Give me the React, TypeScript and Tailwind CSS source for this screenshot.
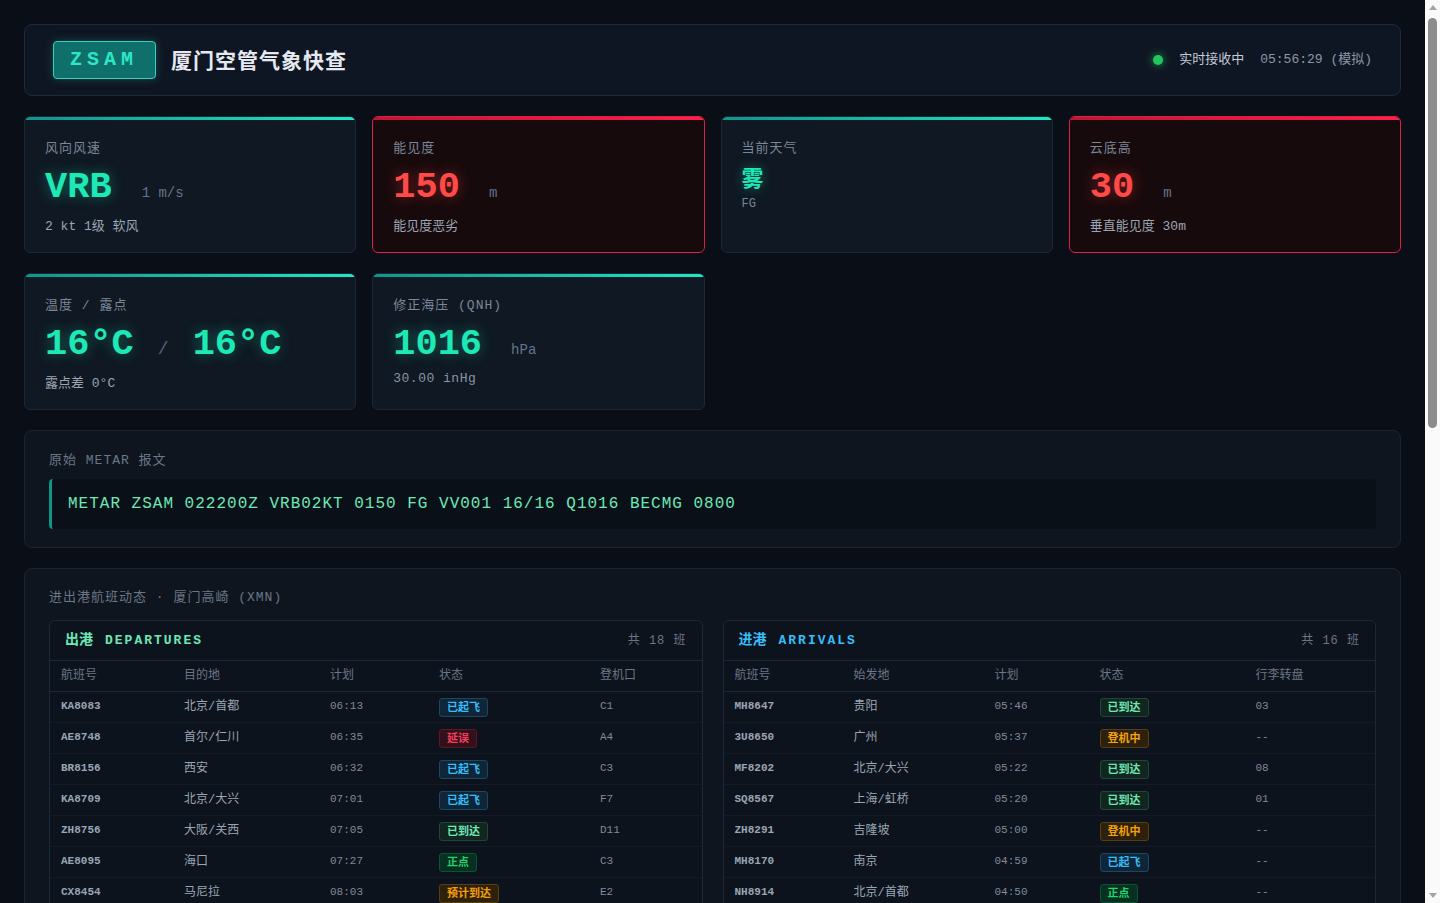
import React from "react";

type Tone = "teal" | "red";

type Flight = {
  no: string;
  place: string;
  time: string;
  status: string;
  extra: string;
};

const departures: Flight[] = [
  { no: "KA8083", place: "北京/首都", time: "06:13", status: "已起飞", extra: "C1" },
  { no: "AE8748", place: "首尔/仁川", time: "06:35", status: "延误", extra: "A4" },
  { no: "BR8156", place: "西安", time: "06:32", status: "已起飞", extra: "C3" },
  { no: "KA8709", place: "北京/大兴", time: "07:01", status: "已起飞", extra: "F7" },
  { no: "ZH8756", place: "大阪/关西", time: "07:05", status: "已到达", extra: "D11" },
  { no: "AE8095", place: "海口", time: "07:27", status: "正点", extra: "C3" },
  { no: "CX8454", place: "马尼拉", time: "08:03", status: "预计到达", extra: "E2" },
  { no: "MF8517", place: "成都/天府", time: "08:10", status: "登机中", extra: "B6" },
  { no: "CZ3812", place: "深圳", time: "08:25", status: "正点", extra: "A2" },
  { no: "3U8831", place: "重庆", time: "08:40", status: "延误", extra: "C5" },
  { no: "MU5186", place: "上海/浦东", time: "08:55", status: "正点", extra: "B1" },
  { no: "SQ8469", place: "新加坡", time: "09:05", status: "登机中", extra: "E4" },
  { no: "ZH8920", place: "杭州", time: "09:20", status: "正点", extra: "D3" },
  { no: "HU7304", place: "武汉", time: "09:35", status: "延误", extra: "A7" },
  { no: "MF8109", place: "昆明", time: "09:50", status: "正点", extra: "B8" },
  { no: "CA1810", place: "北京/首都", time: "10:05", status: "正点", extra: "C2" },
  { no: "NH8922", place: "东京/成田", time: "10:20", status: "正点", extra: "E1" },
  { no: "MH8375", place: "吉隆坡", time: "10:40", status: "正点", extra: "F3" },
];

const arrivals: Flight[] = [
  { no: "MH8647", place: "贵阳", time: "05:46", status: "已到达", extra: "03" },
  { no: "3U8650", place: "广州", time: "05:37", status: "登机中", extra: "--" },
  { no: "MF8202", place: "北京/大兴", time: "05:22", status: "已到达", extra: "08" },
  { no: "SQ8567", place: "上海/虹桥", time: "05:20", status: "已到达", extra: "01" },
  { no: "ZH8291", place: "吉隆坡", time: "05:00", status: "登机中", extra: "--" },
  { no: "MH8170", place: "南京", time: "04:59", status: "已起飞", extra: "--" },
  { no: "NH8914", place: "北京/首都", time: "04:50", status: "正点", extra: "--" },
  { no: "CZ3906", place: "沈阳", time: "06:15", status: "预计到达", extra: "--" },
  { no: "MF8308", place: "天津", time: "06:30", status: "延误", extra: "--" },
  { no: "CA1805", place: "北京/首都", time: "06:45", status: "正点", extra: "--" },
  { no: "MU5225", place: "上海/浦东", time: "07:00", status: "预计到达", extra: "--" },
  { no: "HO1052", place: "西安", time: "07:20", status: "正点", extra: "--" },
  { no: "ZH8703", place: "长沙", time: "07:35", status: "延误", extra: "--" },
  { no: "KA8012", place: "香港", time: "07:50", status: "正点", extra: "--" },
  { no: "BR8189", place: "台北/桃园", time: "08:05", status: "正点", extra: "--" },
  { no: "MF8656", place: "哈尔滨", time: "08:30", status: "预计到达", extra: "--" },
];

const statusClass: Record<string, string> = {
  已起飞: "text-[#38bdf8] bg-[#0e2638] border-[#1d4661]",
  延误: "text-[#f43f5e] bg-[#33101a] border-[#5b1628]",
  已到达: "text-[#6ee7b7] bg-[#10261f] border-[#1f4638]",
  正点: "text-[#22d36e] bg-[#06301f] border-[#0d5232]",
  预计到达: "text-[#f59e0b] bg-[#2e210c] border-[#5a3d12]",
  登机中: "text-[#f5a30b] bg-[#2e210c] border-[#5a3d12]",
};

function Card({
  tone,
  label,
  children,
}: {
  tone: Tone;
  label: string;
  children: React.ReactNode;
}) {
  const red = tone === "red";
  return (
    <div
      className={
        red
          ? "flex flex-col overflow-hidden rounded-md border border-[#dc1f45] bg-[#170a0c]"
          : "flex flex-col overflow-hidden rounded-md border border-[#1c2838] bg-[#0f1823]"
      }
    >
      <div
        className={
          red
            ? "h-[3px] bg-gradient-to-r from-[#c01634] to-[#ff1f4b]"
            : "h-[3px] bg-gradient-to-r from-[#11958a] to-[#1de9c4]"
        }
      />
      <div className="px-5 pt-[19px] pb-[15px]">
        <div className="text-[13px] leading-5 tracking-[1px] text-[#7b8696]">{label}</div>
        {children}
      </div>
    </div>
  );
}

function BigValue({ tone, children }: { tone: Tone; children: React.ReactNode }) {
  return (
    <span
      className={
        tone === "red"
          ? "text-[37px] font-bold leading-10 text-[#ff4a4a] [text-shadow:0_0_14px_rgba(255,60,60,0.45)]"
          : "text-[37px] font-bold leading-10 text-[#1de9b6] [text-shadow:0_0_14px_rgba(29,233,182,0.4)]"
      }
    >
      {children}
    </span>
  );
}

function FlightTable({
  kind,
  rows,
}: {
  kind: "dep" | "arr";
  rows: Flight[];
}) {
  const dep = kind === "dep";
  const cols = dep ? ["航班号", "目的地", "计划", "状态", "登机口"] : ["航班号", "始发地", "计划", "状态", "行李转盘"];
  const widths = dep
    ? ["w-[123px]", "w-[146px]", "w-[109px]", "w-[161px]", ""]
    : ["w-[119px]", "w-[141px]", "w-[105px]", "w-[156px]", ""];
  return (
    <div className="overflow-hidden rounded-md border border-[#1c2838] bg-[#0c131d]">
      <div className="flex h-10 items-center justify-between border-b border-[#1c2838] px-[15px]">
        <div className={dep ? "flex items-center text-[#6ee7b7]" : "flex items-center text-[#38bdf8]"}>
          <span className="text-[14px] font-bold">{dep ? "出港" : "进港"}</span>
          <span className="ml-3 text-[13px] font-bold tracking-[2px]">{dep ? "DEPARTURES" : "ARRIVALS"}</span>
        </div>
        <div className="text-[12px] tracking-[1px] text-[#6b7686]">
          共 {rows.length} 班
        </div>
      </div>
      <table className="w-full table-fixed border-collapse">
        <colgroup>
          {widths.map((w, i) => (
            <col key={i} className={w} />
          ))}
        </colgroup>
        <thead>
          <tr className="h-[30px] border-b border-[#1c2838]">
            {cols.map((c) => (
              <th key={c} className="px-[11px] pt-px text-left text-[12px] font-normal text-[#6b7686]">
                {c}
              </th>
            ))}
          </tr>
        </thead>
        <tbody>
          {rows.map((f, i) => (
            <tr key={f.no + i} className="h-[31px] border-t border-[#131b27] first:border-t-0">
              <td className="px-[11px] text-[11px] font-bold text-[#9aa5b4]">{f.no}</td>
              <td className="px-[11px] text-[12px] text-[#9aa5b4]">{f.place}</td>
              <td className="px-[11px] text-[11px] text-[#7f8a9a]">{f.time}</td>
              <td className="px-[11px]">
                <span
                  className={
                    "inline-flex h-[19px] items-center rounded-[3px] border px-[7px] text-[11px] font-bold " +
                    statusClass[f.status]
                  }
                >
                  {f.status}
                </span>
              </td>
              <td className="px-[11px] text-[11px] text-[#7f8a9a]">{f.extra}</td>
            </tr>
          ))}
        </tbody>
      </table>
    </div>
  );
}

const history = [
  "METAR ZSAM 022130Z VRB01KT 0200 FG VV001 16/16 Q1016 NOSIG",
  "METAR ZSAM 022100Z 03002MPS 0300 FG VV002 16/16 Q1016 NOSIG",
  "METAR ZSAM 022030Z 03002MPS 0500 FG SCT002 17/16 Q1016 NOSIG",
  "METAR ZSAM 022000Z 04002MPS 0800 BR FG BKN003 17/16 Q1016 BECMG 0500",
  "METAR ZSAM 021930Z 04003MPS 1200 BR BKN004 17/16 Q1015 NOSIG",
  "METAR ZSAM 021900Z 04003MPS 1500 BR BKN005 17/16 Q1015 NOSIG",
  "METAR ZSAM 021830Z 05003MPS 2000 BR BKN006 18/16 Q1015 NOSIG",
];

// page scrollbar, drawn since the window chrome hides its own
function ScrollRail() {
  return (
    <div className="flex h-screen w-[15px] shrink-0 flex-col bg-[#fafafa]">
      <div className="flex h-[15px] items-center justify-center">
        <div className="h-0 w-0 border-x-[4px] border-b-[5px] border-x-transparent border-b-[#a3a3a3]" />
      </div>
      <div className="flex-1 px-[3px] pt-[3px]">
        <div className="h-[410px] w-[9px] rounded-full bg-[#8c8c8c]" />
      </div>
      <div className="flex h-[15px] items-center justify-center">
        <div className="h-0 w-0 border-x-[4px] border-t-[5px] border-x-transparent border-t-[#a3a3a3]" />
      </div>
    </div>
  );
}

export default function App() {
  return (
    <div className="flex h-screen bg-[#0a0e16] font-['Liberation_Mono','Noto_Sans_CJK_SC',monospace] text-[#cbd5e1]">
      <div className="h-screen min-w-0 flex-1 overflow-y-auto">
        <div className="flex flex-col gap-5 p-6">
          {/* header */}
          <header className="flex items-center justify-between rounded-lg border border-[#1c2a3a] bg-[#0f1623] px-7 py-4">
            <div className="flex items-center gap-[15px]">
              <div className="flex h-[38px] items-center rounded-[4px] border border-[#2dd4bf] bg-[#0f6f6a] pl-4 pr-[17px] text-[20px] font-bold tracking-[5px] text-[#2de6c6] shadow-[0_0_10px_rgba(45,212,191,0.25)]">
                ZSAM
              </div>
              <h1 className="font-['Noto_Sans_CJK_SC',sans-serif] text-[21px] font-bold tracking-[1px] text-[#e6eaf0]">
                厦门空管气象快查
              </h1>
            </div>
            <div className="flex items-center gap-4">
              <span className="h-2.5 w-2.5 rounded-full bg-[#22c55e] shadow-[0_0_8px_rgba(34,197,94,0.8)]" />
              <span className="text-[13px] text-[#c2cad6]">实时接收中</span>
              <span className="text-[13px] text-[#8b97a8]">05:56:29 (模拟)</span>
            </div>
          </header>

          {/* cards */}
          <div className="grid grid-cols-4 gap-x-4 gap-y-5">
            <Card tone="teal" label="风向风速">
              <div className="mt-2 flex items-baseline">
                <BigValue tone="teal">VRB</BigValue>
                <span className="ml-[30px] text-[14px] text-[#64748b]">1 m/s</span>
              </div>
              <div className="mt-2.5 text-[13px] leading-5 text-[#9ba5b3]">2 kt 1级 软风</div>
            </Card>
            <Card tone="red" label="能见度">
              <div className="mt-2 flex items-baseline">
                <BigValue tone="red">150</BigValue>
                <span className="ml-[29px] text-[14px] text-[#64748b]">m</span>
              </div>
              <div className="mt-2.5 text-[13px] leading-5 text-[#9ba5b3]">能见度恶劣</div>
            </Card>
            <Card tone="teal" label="当前天气">
              <div className="mt-1 font-['Noto_Sans_CJK_SC',sans-serif] text-[22px] font-bold leading-[26px] text-[#1de9b6] [text-shadow:0_0_12px_rgba(29,233,182,0.4)]">
                雾
              </div>
              <div className="mt-[7px] text-[12px] leading-4 text-[#7b8696]">FG</div>
            </Card>
            <Card tone="red" label="云底高">
              <div className="mt-2 flex items-baseline">
                <BigValue tone="red">30</BigValue>
                <span className="ml-[29px] text-[14px] text-[#64748b]">m</span>
              </div>
              <div className="mt-2.5 text-[13px] leading-5 text-[#9ba5b3]">垂直能见度 30m</div>
            </Card>
            <Card tone="teal" label="温度 / 露点">
              <div className="mt-2 flex items-baseline">
                <BigValue tone="teal">16°C</BigValue>
                <span className="mx-6 text-[18px] text-[#56627a]">/</span>
                <BigValue tone="teal">16°C</BigValue>
              </div>
              <div className="mt-2.5 text-[13px] leading-5 text-[#9ba5b3]">露点差 0°C</div>
            </Card>
            <Card tone="teal" label="修正海压 (QNH)">
              <div className="mt-2 flex items-baseline">
                <BigValue tone="teal">1016</BigValue>
                <span className="ml-[29px] text-[14px] text-[#64748b]">hPa</span>
              </div>
              <div className="mt-[5px] text-[13px] leading-5 tracking-[0.5px] text-[#8a95a5]">30.00 inHg</div>
            </Card>
          </div>

          {/* raw metar */}
          <section className="rounded-lg border border-[#1a2431] bg-[#0e151f] px-6 pt-5 pb-[18px]">
            <div className="text-[13px] leading-5 tracking-[1px] text-[#6b7686]">原始 METAR 报文</div>
            <div className="mt-2 flex h-[50px] items-center rounded-[4px] border-l-[3px] border-[#0f9488] bg-[#0a1017] pl-4">
              <span className="text-[16px] tracking-[1px] text-[#6ee7b7]">
                METAR ZSAM 022200Z VRB02KT 0150 FG VV001 16/16 Q1016 BECMG 0800
              </span>
            </div>
          </section>

          {/* flights */}
          <section className="rounded-lg border border-[#1a2431] bg-[#0e151f] px-6 pt-[19px] pb-6">
            <div className="text-[13px] leading-5 tracking-[1px] text-[#6b7686]">
              进出港航班动态 · 厦门高崎 (XMN)
            </div>
            <div className="mt-3 grid grid-cols-2 gap-5">
              <FlightTable kind="dep" rows={departures} />
              <FlightTable kind="arr" rows={arrivals} />
            </div>
          </section>

          {/* taf */}
          <section className="rounded-lg border border-[#1a2431] bg-[#0e151f] px-6 pt-[17px] pb-[18px]">
            <div className="text-[13px] leading-5 tracking-[1px] text-[#6b7686]">机场预报 TAF</div>
            <div className="mt-[9px] rounded-[4px] border-l-[3px] border-[#0f9488] bg-[#0a1017] px-4 py-3.5 text-[15px] leading-7 tracking-[1px] text-[#6ee7b7]">
              <div>TAF ZSAM 022100Z 0300/0324 VRB02MPS 0300 FG VV002</div>
              <div className="pl-8">BECMG 0301/0302 04003MPS 1500 BR BKN004</div>
              <div className="pl-8">BECMG 0303/0304 05004MPS 4000 BR SCT010</div>
            </div>
          </section>

          {/* history */}
          <section className="rounded-lg border border-[#1a2431] bg-[#0e151f] px-6 pt-[17px] pb-[18px]">
            <div className="text-[13px] leading-5 tracking-[1px] text-[#6b7686]">近 3 小时 METAR 记录</div>
            <div className="mt-[9px] flex flex-col">
              {history.map((h) => (
                <div key={h} className="border-b border-[#131b27] py-2.5 text-[13px] tracking-[0.5px] text-[#8a95a5] last:border-b-0">
                  {h}
                </div>
              ))}
            </div>
          </section>

          <footer className="py-3 text-center text-[12px] tracking-[1px] text-[#4b5566]">
            数据为模拟演示 · 仅供参考，请以官方发布为准
          </footer>
        </div>
      </div>
      <ScrollRail />
    </div>
  );
}
